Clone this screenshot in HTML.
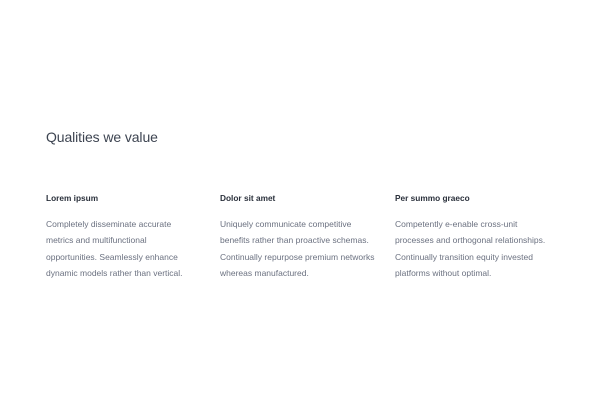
<!DOCTYPE html>
<html><head><style>
body{margin:0;width:600px;height:400px;background:#fff;font-family:"Liberation Sans",sans-serif;position:relative;overflow:hidden}
h2{position:absolute;left:46px;top:129px;margin:0;font-weight:300;font-size:14px;color:#3d4451;letter-spacing:-0.1px}
.c{position:absolute;top:192px;width:170px}
.c h3{margin:0;font-size:8.3px;font-weight:bold;color:#2a303b;line-height:12px}
.c p{margin:12px 0 0;font-size:8.5px;line-height:16.3px;color:#6b7180}
</style></head><body>
<h2>Qualities we value</h2>
<div class="c" style="left:46px"><h3>Lorem ipsum</h3><p>Completely disseminate accurate<br>metrics and multifunctional<br>opportunities. Seamlessly enhance<br>dynamic models rather than vertical.</p></div>
<div class="c" style="left:220px"><h3>Dolor sit amet</h3><p>Uniquely communicate competitive<br>benefits rather than proactive schemas.<br>Continually repurpose premium networks<br>whereas manufactured.</p></div>
<div class="c" style="left:395px"><h3>Per summo graeco</h3><p>Competently e-enable cross-unit<br>processes and orthogonal relationships.<br>Continually transition equity invested<br>platforms without optimal.</p></div>
</body></html>
